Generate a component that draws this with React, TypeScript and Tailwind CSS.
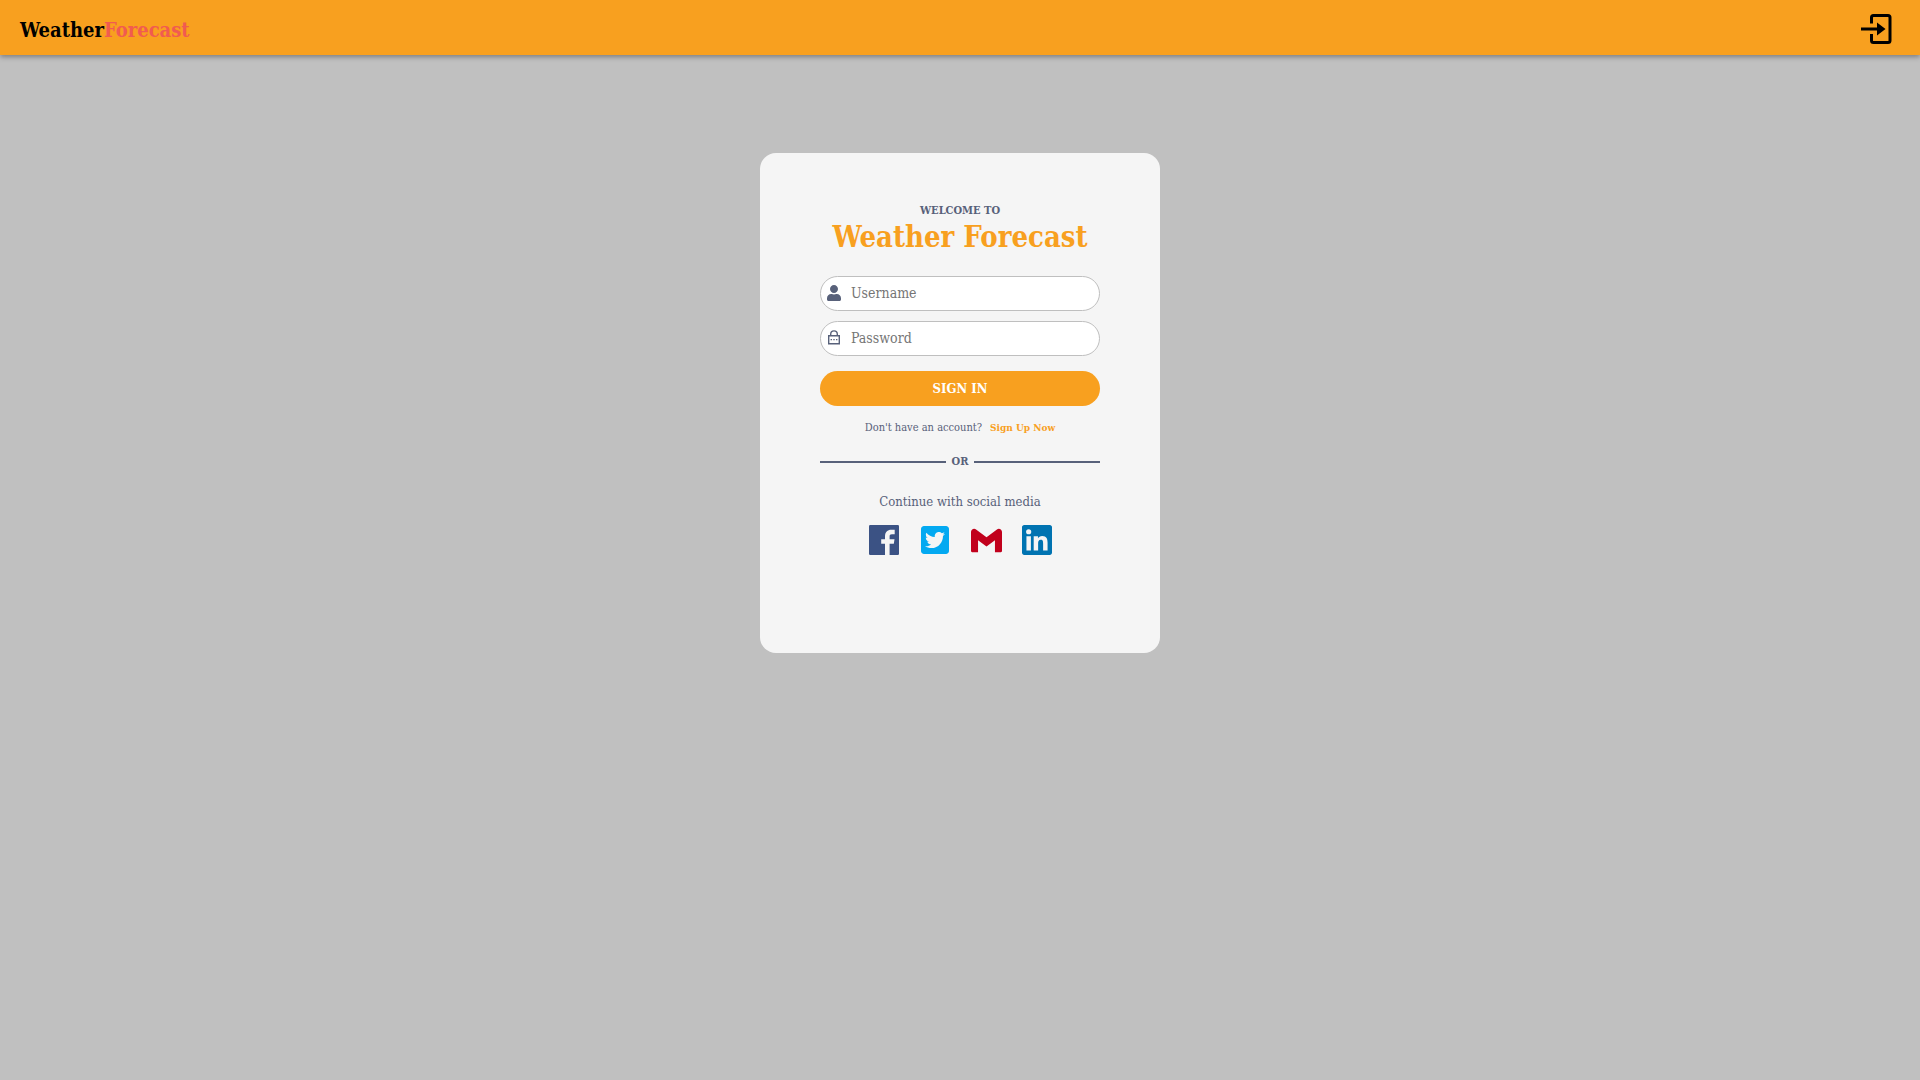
import React from "react";
import { FaTwitterSquare, FaUser } from "react-icons/fa";

function LoginIcon() {
  return (
    <svg viewBox="0 0 32 35" className="h-[35px] w-8" aria-hidden="true">
      <path
        d="M10.5 13.5V7.5a2 2 0 0 1 2-2H27a2 2 0 0 1 2 2v23a2 2 0 0 1-2 2H12.5a2 2 0 0 1-2-2V24"
        fill="none"
        stroke="currentColor"
        strokeWidth="3"
      />
      <path d="M0 17.5h16V12.5l8.5 6.5-8.5 6.5v-5H0z" fill="currentColor" />
    </svg>
  );
}

function LockIcon() {
  return (
    <svg viewBox="0 0 14 16" className="h-4 w-3.5" aria-hidden="true" fill="none" stroke="currentColor">
      <path d="M1.7 5.7h10.6v8.1H1.7z" strokeWidth="1.4" />
      <path d="M3.7 5.5V4.2a3.3 3.3 0 0 1 6.6 0v1.3" strokeWidth="1.4" />
      <path d="M3.6 9.7h1.4M6.3 9.7h1.4M9 9.7h1.4" strokeWidth="1.3" />
    </svg>
  );
}

function FacebookIcon() {
  return (
    <svg viewBox="0 0 30 30" className="h-[30px] w-[30px]" aria-hidden="true">
      <rect width="30" height="30" rx="1.2" fill="#3b5284" />
      <path
        d="M16 30V18.8h-3.8V14.3H16v-2.8c0-4.5 2.4-6.8 6.4-6.8h3.3v4.5h-2.7c-1.9 0-2.4.8-2.4 2.2v2.9h4.9l-.7 4.5h-4.2V30z"
        fill="#f5f5f5"
      />
    </svg>
  );
}

function GmailIcon() {
  return (
    <svg viewBox="0 0 24 24" className="h-[31px] w-[31px]" aria-hidden="true" fill="#c1001c">
      <path d="M24 5.457v14.7c0 .5-.4.845-.9.845h-4.555V11.73L12 16.64l-6.545-4.91v9.273H.9a.87.87 0 0 1-.9-.845V5.457c0-2.023 2.309-3.178 3.927-1.964L5.455 4.64 12 9.548l6.545-4.91 1.528-1.145C21.69 2.28 24 3.434 24 5.457z" />
    </svg>
  );
}

function LinkedInIcon() {
  return (
    <svg viewBox="0 0 24 24" className="h-[30px] w-[30px]" aria-hidden="true" fill="#0073b1">
      <path d="M20.447 20.452h-3.554v-5.569c0-1.328-.027-3.037-1.852-3.037-1.853 0-2.136 1.445-2.136 2.939v5.667H9.351V9h3.414v1.561h.046c.477-.9 1.637-1.85 3.37-1.85 3.601 0 4.267 2.37 4.267 5.455v6.286zM5.337 7.433a2.062 2.062 0 0 1-2.063-2.065 2.064 2.064 0 1 1 2.063 2.065zm1.782 13.019H3.555V9h3.564v11.452zM22.225 0H1.771C.792 0 0 .774 0 1.729v20.542C0 23.227.792 24 1.771 24h20.451C23.2 24 24 23.227 24 22.271V1.729C24 .774 23.2 0 22.222 0h.003z" />
    </svg>
  );
}

function Field({ id, type, label, icon }: { id: string; type: string; label: string; icon: React.ReactNode }) {
  return (
    <div className="flex h-[35px] items-center rounded-full border border-[#bfbfbf] bg-white pb-0.5 pl-1.5 pr-4">
      <label htmlFor={id} aria-label={label} className="text-[#58617a]">
        {icon}
      </label>
      <input
        id={id}
        type={type}
        placeholder={label}
        className="ml-2.5 min-w-0 flex-1 bg-transparent text-sm outline-none placeholder:text-[#757575]"
      />
    </div>
  );
}

export default function App() {
  return (
    <div className="min-h-screen bg-[#c0c0c0] font-['DejaVu_Serif_Condensed','DejaVu_Serif',serif] text-[#58617a]">
      <header className="flex h-[55px] items-center justify-between bg-[#f8a01f] pl-5 pr-[27px] text-black shadow-[0_2px_5px_rgba(0,0,0,0.35)]">
        <a href="#" className="pt-1 text-xl font-bold">
          Weather<span className="text-[#f15b50]">Forecast</span>
        </a>
        <button type="button" aria-label="Log in">
          <LoginIcon />
        </button>
      </header>
      <main className="flex justify-center px-4 pt-[98px]">
        <section className="min-h-[500px] w-full max-w-[400px] rounded-2xl bg-[#f5f5f5] px-[60px] pt-12 pb-12 text-center">
          <p className="text-[11px] leading-5 font-bold">WELCOME TO</p>
          <h1 className="text-[29px] leading-8 font-bold whitespace-nowrap text-[#f8a01f]">Weather Forecast</h1>
          <form className="mt-[23px] flex flex-col gap-2.5" onSubmit={(e) => e.preventDefault()}>
            <Field id="username" type="text" label="Username" icon={<FaUser className="h-4 w-3.5" />} />
            <Field id="password" type="password" label="Password" icon={<LockIcon />} />
            <button type="submit" className="mt-[5px] h-[35px] rounded-full bg-[#f8a01f] text-[13px] font-bold text-white">
              SIGN IN
            </button>
          </form>
          <p className="mt-3 flex justify-center gap-2 text-[11px] leading-5">
            Don't have an account?
            <a href="#" className="text-[10px] font-bold text-[#f8a01f]">
              Sign Up Now
            </a>
          </p>
          <div className="mt-3.5 flex items-center gap-1.5 text-[11px] leading-5 font-bold">
            <span className="h-0.5 flex-1 bg-[#58617a]" />
            OR
            <span className="h-0.5 flex-1 bg-[#58617a]" />
          </div>
          <p className="mt-5 text-[13px] leading-5">Continue with social media</p>
          <div className="mt-3 flex items-center justify-center gap-5">
            <a href="#" aria-label="Facebook">
              <FacebookIcon />
            </a>
            <a href="#" aria-label="Twitter">
              <FaTwitterSquare className="h-8 w-8 text-[#03a9f1]" />
            </a>
            <a href="#" aria-label="Gmail">
              <GmailIcon />
            </a>
            <a href="#" aria-label="LinkedIn">
              <LinkedInIcon />
            </a>
          </div>
        </section>
      </main>
    </div>
  );
}
